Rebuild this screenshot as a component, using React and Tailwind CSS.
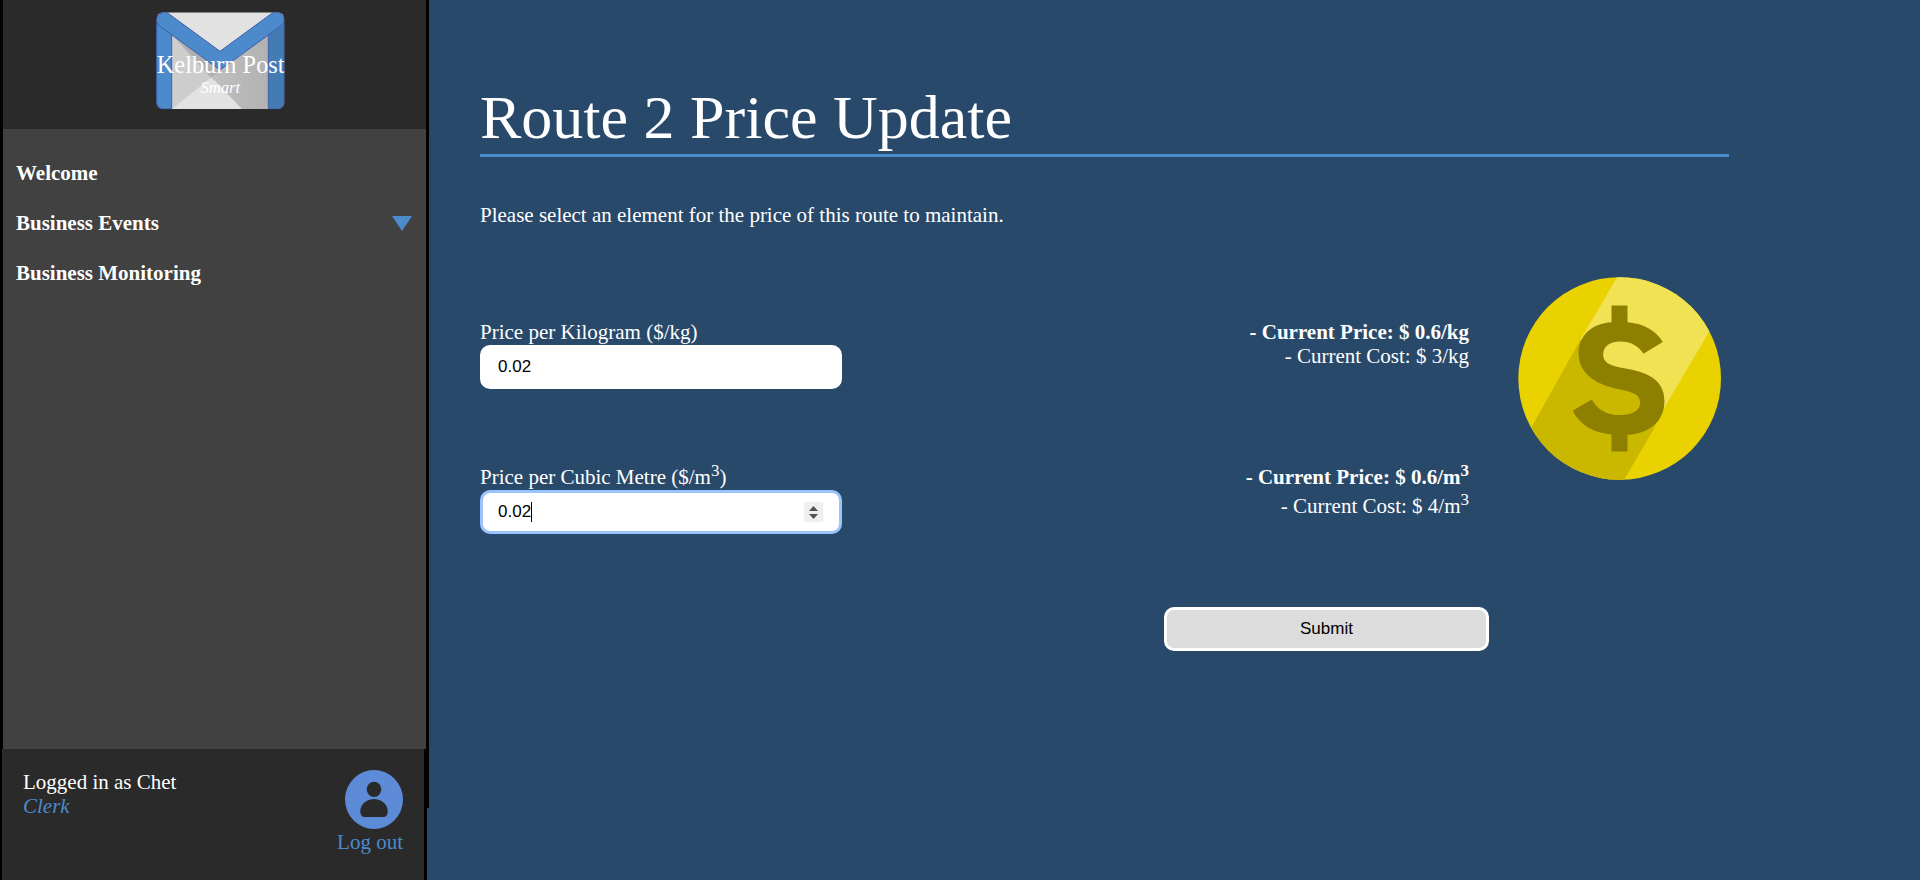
import React, { useRef } from "react";

function EnvelopeLogo() {
  return (
    <svg viewBox="0 0 480 360" className="w-40 h-[120px]" role="img" aria-label="Kelburn Post Smart">
      <defs>
        <linearGradient id="flap" x1="0" x2="1" y1="0" y2="0">
          <stop offset="0" stopColor="#c8c8c8" />
          <stop offset="1" stopColor="#b2b2b2" />
        </linearGradient>
        <clipPath id="envelope">
          <rect x="50" y="37" width="383" height="290" rx="20" />
        </clipPath>
      </defs>
      <g clipPath="url(#envelope)">
        <rect x="50" y="37" width="383" height="290" fill="#e2e2e2" />
        <path d="M96 105 L200 216 L230 240 L96 327 Z" fill="#cdcdcd" />
        <path d="M96 104 L240 209 L385 104 V327 H305 Z" fill="url(#flap)" />
        <path d="M96 104 L240 209 L213 233 Z" fill="#b0b0b0" />
        <path d="M96 327 L213 233 L305 327 Z" fill="#e2e2e2" />
      </g>
      <path d="M50 70 L95 104 V326 H70 Q50 326 50 306 Z" fill="#4c8acb" stroke="#3f5fae" strokeWidth="3" />
      <path d="M432 70 L385 104 V326 H412 Q432 326 432 306 Z" fill="#447bb3" stroke="#3f5fae" strokeWidth="3" />
      <path
        d="M86 41 L240 154 L394 41 C406 33 423 37 430 50 C434 61 431 72 421 79 L240 210 L60 79 C50 72 47 59 53 49 C60 36 76 34 86 41 Z"
        fill="#4c8acb"
        stroke="#3f5fae"
        strokeWidth="3"
      />
      <text x="242" y="219" textAnchor="middle" fontSize="73" fill="#ffffff" fontFamily="'Liberation Serif', serif">
        Kelburn Post
      </text>
      <text x="241" y="278" textAnchor="middle" fontSize="50" fontStyle="italic" fill="#ffffff" fontFamily="'Liberation Serif', serif">
        Smart
      </text>
    </svg>
  );
}

function CoinIcon() {
  return (
    <svg viewBox="82 52 610 610" className="w-[203px] h-[203px] shrink-0" aria-hidden="true">
      <defs>
        <clipPath id="coin">
          <circle cx="387.5" cy="357" r="304.5" />
        </clipPath>
      </defs>
      <g clipPath="url(#coin)">
        <rect x="82" y="52" width="612" height="612" fill="#e9d200" />
        <path d="M380 52 L400 20 H770 L656 217 L522 445 L387 420 L270 240 Z" fill="#f0e252" />
        <path d="M270 240 L122 504 L80 580 L80 700 H380 L402 660 L496 498 L450 400 L380 385 L300 330 Z" fill="#cab700" />
      </g>
      <path
        d="M363 138 H411 V188 C455 191 496 212 517 247 L459 283 C444 259 421 246 389 246 C357 246 338 261 338 286 C338 306 353 317 385 323 L425 331 C490 345 522 374 522 425 C522 484 478 522 411 526 V576 H363 V525 C311 521 270 499 246 454 L304 420 C322 452 349 467 388 467 C427 467 449 453 449 430 C449 408 432 398 389 390 C309 375 264 337 264 281 C264 228 305 191 363 188 Z"
        fill="#8d8000"
      />
    </svg>
  );
}

function AvatarIcon() {
  return (
    <svg viewBox="0 0 174 177" className="w-[58px] h-[59px]" aria-hidden="true">
      <ellipse cx="87" cy="88.500" rx="87" ry="88.500" fill="#5d8bd8" />
      <ellipse cx="87" cy="58" rx="22" ry="23" fill="#2a2a2a" />
      <path d="M87 87 C109 87 128 103 128 123 C128 135 124 141 113 141 H61 C50 141 46 135 46 123 C46 103 65 87 87 87 Z" fill="#2a2a2a" />
    </svg>
  );
}

function Cubed() {
  return <sup className="static top-auto align-super text-[17px] leading-[21px]">3</sup>;
}

function Stepper({ inputRef }) {
  return (
    <div className="absolute right-[19px] top-3 flex flex-col w-[19px] h-5 bg-[#efefef]">
      <button type="button" aria-label="Increase" tabIndex={-1} className="flex-1 flex items-end justify-center pb-px" onClick={() => inputRef.current.stepUp()}>
        <svg viewBox="0 0 9 5" className="w-[9px] h-[5px]" aria-hidden="true">
          <path d="M0 5 L4.500 0 L9 5 Z" fill="#505050" />
        </svg>
      </button>
      <button type="button" aria-label="Decrease" tabIndex={-1} className="flex-1 flex items-start justify-center pt-0.5" onClick={() => inputRef.current.stepDown()}>
        <svg viewBox="0 0 9 5" className="w-[9px] h-[5px]" aria-hidden="true">
          <path d="M0 0 L4.500 5 L9 0 Z" fill="#505050" />
        </svg>
      </button>
    </div>
  );
}

function PriceRow({ id, label, value, price, cost, focused }) {
  const inputRef = useRef(null);
  return (
    <div className="flex justify-between items-start">
      <div className="w-[362px]">
        <label htmlFor={id} className="block mb-px">
          {label}
        </label>
        <div className="relative">
          <input
            ref={inputRef}
            id={id}
            type="number"
            step="0.01"
            defaultValue={value}
            autoFocus={focused}
            className="block w-full h-11 rounded-[10px] border-3 border-white bg-white px-[15px] font-['Liberation_Sans',sans-serif] text-[17px] text-black caret-transparent outline-none focus:border-[#98c3fb] [appearance:textfield]"
          />
          {focused && (
            <>
              <span className="absolute left-[51px] top-3 w-px h-5 bg-black" aria-hidden="true" />
              <Stepper inputRef={inputRef} />
            </>
          )}
        </div>
      </div>
      <div className="pr-5 text-right">
        <p className="font-bold">{price}</p>
        <p>{cost}</p>
      </div>
    </div>
  );
}

function Sidebar() {
  return (
    <aside className="w-[429px] shrink-0 min-h-screen flex flex-col">
      <div className="flex-1 flex flex-col bg-[#414141] border-x-3 border-black">
        <header className="h-[129px] bg-[#2a2a2a] flex justify-center pl-[11px]">
          <EnvelopeLogo />
        </header>
        <nav className="pt-[19px] pl-[13px] pr-[14px] font-bold">
          <a href="#welcome" className="flex items-center h-[50px]">Welcome</a>
          <a href="#events" className="flex items-center justify-between h-[50px]">
            Business Events
            <svg viewBox="0 0 20 15" className="w-5 h-[15px]" aria-hidden="true">
              <path d="M0 0 H20 L10 15 Z" fill="#4c8acb" />
            </svg>
          </a>
          <a href="#monitoring" className="flex items-center h-[50px]">Business Monitoring</a>
        </nav>
      </div>
      <div className="flex bg-gradient-to-b from-black from-45% to-transparent to-45%">
        <footer className="flex-1 mr-0.5 h-[131px] bg-[#2a2a2a] border-l-2 border-r-3 border-black flex justify-between pt-[21px] px-[21px]">
          <div>
            <p>Logged in as Chet</p>
            <p className="italic text-[#4c8acb]">Clerk</p>
          </div>
          <a href="#logout" className="flex flex-col items-end gap-px text-[#4c8acb]">
            <AvatarIcon />
            Log out
          </a>
        </footer>
      </div>
    </aside>
  );
}

export default function App() {
  return (
    <div className="flex min-h-screen bg-[#29496b] text-white font-['Liberation_Serif',serif] text-[21px] leading-6">
      <Sidebar />
      <main className="flex-1 pt-[81px] pl-[51px] pr-[191px]">
        <h1 className="text-[62px] leading-[72px] pb-px border-b-3 border-[#4c8acb]">Route 2 Price Update</h1>
        <p className="mt-[46px]">Please select an element for the price of this route to maintain.</p>
        <div className="flex">
          <form className="flex-1 flex flex-col gap-[71px] pt-[93px]" onSubmit={(e) => e.preventDefault()}>
            <PriceRow
              id="per-kg"
              label="Price per Kilogram ($/kg)"
              value="0.02"
              price="- Current Price: $ 0.6/kg"
              cost="- Current Cost: $ 3/kg"
            />
            <PriceRow
              id="per-m3"
              label={<>Price per Cubic Metre ($/m<Cubed />)</>}
              value="0.02"
              price={<>- Current Price: $ 0.6/m<Cubed /></>}
              cost={<>- Current Cost: $ 4/m<Cubed /></>}
              focused
            />
            <div className="flex justify-end pt-0.5">
              <button
                type="submit"
                className="w-[325px] h-11 rounded-[10px] border-3 border-white bg-[#dcdcdc] font-['Liberation_Sans',sans-serif] text-[17px] text-black"
              >
                Submit
              </button>
            </div>
          </form>
          <div className="w-60 pt-[50px] pl-[29px]">
            <CoinIcon />
          </div>
        </div>
      </main>
    </div>
  );
}
